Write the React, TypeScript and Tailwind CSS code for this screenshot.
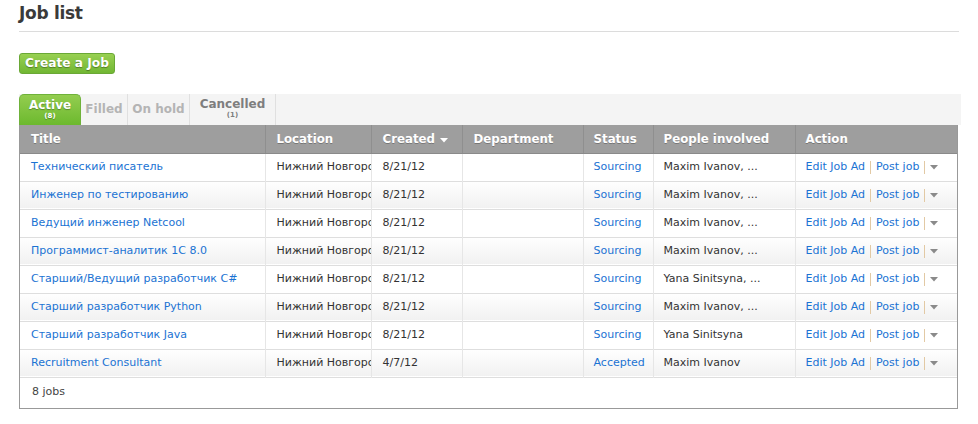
import React from "react";

type Row = {
  title: string;
  created: string;
  status: string;
  people: string;
};

const rows: Row[] = [
  { title: "Технический писатель", created: "8/21/12", status: "Sourcing", people: "Maxim Ivanov, ..." },
  { title: "Инженер по тестированию", created: "8/21/12", status: "Sourcing", people: "Maxim Ivanov, ..." },
  { title: "Ведущий инженер Netcool", created: "8/21/12", status: "Sourcing", people: "Maxim Ivanov, ..." },
  { title: "Программист-аналитик 1С 8.0", created: "8/21/12", status: "Sourcing", people: "Maxim Ivanov, ..." },
  { title: "Старший/Ведущий разработчик C#", created: "8/21/12", status: "Sourcing", people: "Yana Sinitsyna, ..." },
  { title: "Старший разработчик Python", created: "8/21/12", status: "Sourcing", people: "Maxim Ivanov, ..." },
  { title: "Старший разработчик Java", created: "8/21/12", status: "Sourcing", people: "Yana Sinitsyna" },
  { title: "Recruitment Consultant", created: "4/7/12", status: "Accepted", people: "Maxim Ivanov" },
];

const cols = [246, 106, 91, 121, 70, 142, 163];

function Caret({ className }: { className: string }) {
  return (
    <svg width="8" height="5" viewBox="0 0 8 5" className={className}>
      <path d="M0 0 L8 0 L4 4.5 Z" fill="currentColor" />
    </svg>
  );
}

export default function App() {
  return (
    <div
      className="w-[978px] h-[424px] bg-white text-[#333] overflow-hidden"
      style={{ fontFamily: '"DejaVu Sans", Verdana, sans-serif' }}
    >
      <div className="pl-[19px] pr-[19px]">
        <h1 className="pt-[2px] text-[17px] leading-[22px] font-bold text-[#3a3a3a] tracking-[-0.3px]">
          Job list
        </h1>
        <div className="mt-[7px] h-px bg-[#dcdcdc] w-[940px]" />

        <div className="mt-[21px] flex">
          <button className="h-[21px] px-[5px] rounded-[3px] border border-[#6aa836] bg-gradient-to-b from-[#98d051] to-[#71b733] text-white text-[12.2px] font-bold leading-[19px] [text-shadow:0_1px_1px_rgba(0,0,0,0.35)]">
            Create a Job
          </button>
        </div>

        <div className="mt-[20px] w-[942px] h-[31px] bg-[#f4f4f4] flex items-stretch">
          <div className="w-[62px] rounded-t-[5px] border border-b-0 border-[#6fb23a] bg-gradient-to-b from-[#93cd4f] to-[#6cb92d] flex flex-col items-center justify-start pt-[3px] text-white [text-shadow:0_1px_1px_rgba(0,0,0,0.3)]">
            <span className="text-[12px] font-bold leading-[14px]">Active</span>
            <span className="text-[7px] font-bold leading-[8px]">(8)</span>
          </div>
          <div className="w-[47px] border-r border-[#e0e0e0] flex items-center justify-center text-[12px] font-bold text-[#b4b4b4] pb-[2px]">
            Filled
          </div>
          <div className="w-[62px] border-r border-[#e0e0e0] flex items-center justify-center text-[12px] font-bold text-[#b4b4b4] pb-[2px]">
            On hold
          </div>
          <div className="w-[86px] border-r border-[#e0e0e0] flex flex-col items-center pt-[3px] text-[#7e7e7e]">
            <span className="text-[12px] font-bold leading-[14px]">Cancelled</span>
            <span className="text-[7px] font-bold leading-[8px]">(1)</span>
          </div>
        </div>

        <div className="w-[939px] border border-t-0 border-[#999]">
          <table className="w-full table-fixed border-collapse">
            <colgroup>
              {cols.map((w, i) => (
                <col key={i} style={{ width: i === 0 ? w - 1 : i === cols.length - 1 ? w - 1 : w }} />
              ))}
            </colgroup>
            <thead>
              <tr className="h-[28px] bg-[#9e9e9e] text-white text-[11.8px] font-bold [text-shadow:0_1px_0_rgba(0,0,0,0.25)]">
                {["Title", "Location", "Created", "Department", "Status", "People involved", "Action"].map((h, i) => (
                  <th
                    key={h}
                    className={`text-left font-bold pt-[2px] border-b border-[#8a8a8a] ${i < 6 ? "border-r border-r-[#8f8f8f]" : ""} ${
                      i === 4 || i === 5 ? "pl-[10px]" : i === 6 ? "pl-[10px]" : "pl-[11px]"
                    }`}
                  >
                    {h === "Created" ? (
                      <span className="inline-flex items-center gap-[5px]">
                        Created
                        <Caret className="text-white mt-[1px]" />
                      </span>
                    ) : (
                      h
                    )}
                  </th>
                ))}
              </tr>
            </thead>
            <tbody className="text-[11px]">
              {rows.map((r, idx) => (
                <tr
                  key={idx}
                  className={`h-[28px] border-b border-[#dedede] ${
                    idx % 2 === 1 ? "bg-gradient-to-b from-white to-[#f1f1f1]" : "bg-white"
                  }`}
                >
                  <td className="pl-[11px] pt-[1px] border-r border-[#e6e6e6] whitespace-nowrap overflow-hidden text-[#1b73d3]">
                    {r.title}
                  </td>
                  <td className="pl-[11px] pt-[1px] pr-0 border-r border-[#e6e6e6] whitespace-nowrap overflow-hidden text-[#333]">
                    <div className="w-[94px] overflow-hidden">Нижний Новгород</div>
                  </td>
                  <td className="pl-[11px] pt-[1px] border-r border-[#e6e6e6] whitespace-nowrap overflow-hidden text-[#333]">
                    {r.created}
                  </td>
                  <td className="border-r border-[#e6e6e6]" />
                  <td className="pl-[10px] pt-[1px] border-r border-[#e6e6e6] whitespace-nowrap overflow-hidden text-[#1b73d3]">
                    {r.status}
                  </td>
                  <td className="pl-[10px] pt-[1px] border-r border-[#e6e6e6] whitespace-nowrap overflow-hidden text-[#333]">
                    {r.people}
                  </td>
                  <td className="pl-[10px] pt-[1px] whitespace-nowrap overflow-hidden text-[11px] text-[#1b73d3]">
                    <span className="inline-flex items-center">
                      <span>Edit Job Ad</span>
                      <span className="mx-[5px] w-px h-[13px] bg-[#e2c9a4]" />
                      <span>Post job</span>
                      <span className="mx-[5px] w-px h-[13px] bg-[#e2c9a4]" />
                      <Caret className="text-[#8a8a8a]" />
                    </span>
                  </td>
                </tr>
              ))}
            </tbody>
          </table>
          <div className="h-[30px] flex items-center pl-[12px] text-[11px] text-[#444]">8 jobs</div>
        </div>
      </div>
    </div>
  );
}
